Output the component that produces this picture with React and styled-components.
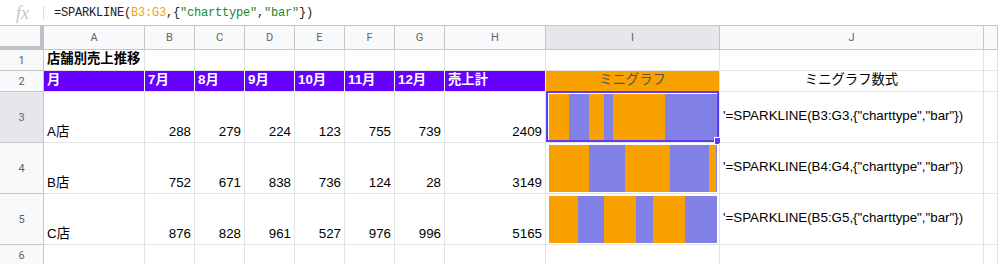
import React from "react";
import styled, { createGlobalStyle } from "styled-components";

const GlobalStyle = createGlobalStyle`
  html, body { margin: 0; padding: 0; background: #fff; overflow: hidden; }
  * { box-sizing: border-box; }
`;

const GRID = "#e2e3e3";
const HEAD_LINE = "#c4c7c5";
const PURPLE = "#6600ff";
const ORANGE = "#f9a100";
const LAVENDER = "#8080e6";
const SELECT = "#5a3df5";

const Page = styled.div`
  width: 998px;
  height: 264px;
  overflow: hidden;
  font-family: "Liberation Sans", Arial, "Noto Sans CJK JP", sans-serif;
`;

const FormulaBar = styled.div`
  display: flex;
  align-items: center;
  height: 26px;
  border-bottom: 1px solid ${HEAD_LINE};
`;

const FxIcon = styled.div`
  width: 43px;
  text-align: center;
  font-family: "Liberation Serif", serif;
  font-style: italic;
  font-size: 18px;
  color: #c3c6ca;
  padding-left: 2px;
  line-height: 20px;
`;

const Divider = styled.div`
  width: 1px;
  height: 14px;
  background: #dadce0;
`;

const FormulaText = styled.div`
  margin-left: 10px;
  font-family: "Liberation Mono", "DejaVu Sans Mono", monospace;
  font-size: 12px;
  letter-spacing: -0.2px;
  color: #202124;
  white-space: pre;
`;

const Tok = styled.span`
  color: ${(p) => p.$c || "#202124"};
`;

const Sheet = styled.div`
  display: grid;
  grid-template-columns: 44px 101px repeat(6, 50px) 101px 174px 264px 1fr;
  grid-template-rows: 24px 21px 21px 51px 51px 51px 21px;
`;

const Corner = styled.div`
  background: #f8f9fa;
  border-right: 4px solid #bfc1c4;
  border-bottom: 4px solid #bfc1c4;
`;

const ColHead = styled.div`
  display: flex;
  align-items: center;
  justify-content: center;
  background: ${(p) => (p.$selected ? "#e5e7eb" : "#f8f9fa")};
  border-right: 1px solid ${HEAD_LINE};
  border-bottom: 1px solid ${HEAD_LINE};
  font-family: Roboto, "Liberation Sans", sans-serif;
  font-size: 11px;
  color: #5f6368;
`;

const RowHead = styled.div`
  display: flex;
  align-items: center;
  justify-content: center;
  background: ${(p) => (p.$selected ? "#e5e7eb" : "#f8f9fa")};
  border-right: 1px solid ${HEAD_LINE};
  border-bottom: 1px solid ${HEAD_LINE};
  font-family: Roboto, "Liberation Sans", sans-serif;
  font-size: 11px;
  color: #5f6368;
`;

const Cell = styled.div`
  position: relative;
  display: flex;
  align-items: ${(p) => p.$valign || "flex-end"};
  justify-content: ${(p) => p.$align || "flex-start"};
  padding: 0 3px 2px 3px;
  background: ${(p) => p.$bg || "#fff"};
  color: ${(p) => p.$color || "#000"};
  font-weight: ${(p) => (p.$bold ? 700 : 400)};
  font-size: 13.33px;
  line-height: 16px;
  white-space: nowrap;
  border-right: 1px solid ${(p) => p.$line || GRID};
  border-bottom: 1px solid ${GRID};
`;

const SparkCell = styled.div`
  position: relative;
  display: flex;
  padding: 2px 2px 1px 3px;
  border-right: 1px solid ${GRID};
  border-bottom: 1px solid ${GRID};
`;

const Spark = styled.div`
  flex: 1;
  display: flex;
`;

const Seg = styled.div`
  flex: ${(p) => p.$v} 1 0;
  min-width: 0;
  background: ${(p) => (p.$odd ? LAVENDER : ORANGE)};
`;

const Selection = styled.div`
  position: absolute;
  top: -1px;
  left: 0;
  right: 0;
  bottom: 0;
  border: 2px solid ${SELECT};
  pointer-events: none;
`;

const Handle = styled.div`
  position: absolute;
  right: -5px;
  bottom: -5px;
  width: 6px;
  height: 6px;
  box-sizing: content-box;
  background: ${SELECT};
  border: 1px solid #fff;
`;

const cols = ["A", "B", "C", "D", "E", "F", "G", "H", "I", "J", ""];
const months = ["月", "7月", "8月", "9月", "10月", "11月", "12月", "売上計"];
const data = [
  { name: "A店", vals: [288, 279, 224, 123, 755, 739], total: 2409, row: 3 },
  { name: "B店", vals: [752, 671, 838, 736, 124, 28], total: 3149, row: 4 },
  { name: "C店", vals: [876, 828, 961, 527, 976, 996], total: 5165, row: 5 },
];

export default function App() {
  return (
    <Page>
      <GlobalStyle />
      <FormulaBar>
        <FxIcon>fx</FxIcon>
        <Divider />
        <FormulaText>
          <Tok>=SPARKLINE(</Tok>
          <Tok $c="#f0a500">B3:G3</Tok>
          <Tok>,{"{"}</Tok>
          <Tok $c="#17892c">"charttype"</Tok>
          <Tok>,</Tok>
          <Tok $c="#17892c">"bar"</Tok>
          <Tok>{"})"}</Tok>
        </FormulaText>
      </FormulaBar>
      <Sheet>
        <Corner />
        {cols.map((c, i) => (
          <ColHead key={i} $selected={c === "I"}>
            {c}
          </ColHead>
        ))}

        <RowHead>1</RowHead>
        <Cell $bold $valign="center">店舗別売上推移</Cell>
        {Array.from({ length: 10 }).map((_, i) => (
          <Cell key={i} />
        ))}

        <RowHead>2</RowHead>
        {months.map((m) => (
          <Cell key={m} $bg={PURPLE} $color="#fff" $bold $line="#fff" $valign="center">
            {m}
          </Cell>
        ))}
        <Cell $bg={ORANGE} $color="#555" $align="center" $valign="center">
          ミニグラフ
        </Cell>
        <Cell $align="center" $valign="center">ミニグラフ数式</Cell>
        <Cell />

        {data.map((r, ri) => (
          <React.Fragment key={r.name}>
            <RowHead $selected={ri === 0}>{r.row}</RowHead>
            <Cell>{r.name}</Cell>
            {r.vals.map((v, i) => (
              <Cell key={i} $align="flex-end">
                {v}
              </Cell>
            ))}
            <Cell $align="flex-end">{r.total}</Cell>
            <SparkCell>
              <Spark>
                {r.vals.map((v, i) => (
                  <Seg key={i} $v={v} $odd={i % 2 === 1} />
                ))}
              </Spark>
              {ri === 0 && (
                <Selection>
                  <Handle />
                </Selection>
              )}
            </SparkCell>
            <Cell $valign="center" $padTop>
              '=SPARKLINE(B{r.row}:G{r.row},{"{"}"charttype","bar"{"}"})
            </Cell>
            <Cell />
          </React.Fragment>
        ))}

        <RowHead>6</RowHead>
        {Array.from({ length: 11 }).map((_, i) => (
          <Cell key={i} />
        ))}
      </Sheet>
    </Page>
  );
}
